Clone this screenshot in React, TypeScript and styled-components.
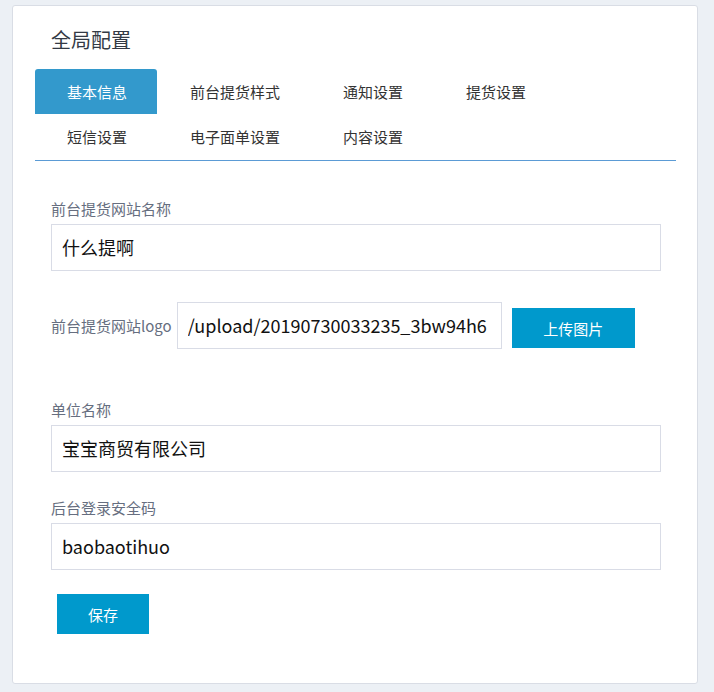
import React from "react";
import styled, { createGlobalStyle } from "styled-components";

const Global = createGlobalStyle`
  html, body { margin: 0; padding: 0; background: #ecf0f5; }
  body { font-family: "Noto Sans CJK SC", "Noto Sans", sans-serif; }
  * { box-sizing: border-box; }
`;

const Card = styled.div`
  margin: 5px 16px 0 12px;
  height: 679px;
  background: #fff;
  border: 1px solid #d9dde5;
  border-radius: 3px;
`;

const Title = styled.div`
  padding: 22px 0 0 38px;
  font-size: 20px;
  line-height: 24px;
  color: #333a45;
`;

const Tabs = styled.div`
  margin: 17px 21px 0 22px;
  display: flex;
  flex-wrap: wrap;
  border-bottom: 1px solid #5b9bd5;
  padding-bottom: 1px;
`;

const Tab = styled.div<{ $active?: boolean }>`
  height: 45px;
  line-height: 45px;
  padding: 0 30px 0 32px;
  margin-right: 1px;
  font-size: 15px;
  color: ${(p) => (p.$active ? "#fff" : "#333")};
  background: ${(p) => (p.$active ? "#3399cc" : "transparent")};
  border-radius: 3px 3px 0 0;
  white-space: nowrap;
`;

const Form = styled.div`
  padding: 38px 0 0 38px;
`;

const Label = styled.div<{ $top?: number }>`
  font-size: 15px;
  line-height: 20px;
  color: #666e80;
  margin-top: ${(p) => p.$top ?? 0}px;
  margin-bottom: 5px;
`;

const Input = styled.input<{ $w?: number }>`
  display: block;
  width: ${(p) => p.$w ?? 610}px;
  height: 47px;
  border: 1px solid #d9dce6;
  padding: 0 10px 1px;
  font-family: "Noto Sans CJK SC", "Noto Sans", sans-serif;
  font-size: 18px;
  color: #111;
  outline: none;
  background: #fff;
`;

const Row = styled.div`
  display: flex;
  align-items: center;
  margin-top: 31px;
`;

const InlineLabel = styled.div`
  font-size: 15px;
  color: #666e80;
  margin-right: 5px;
  white-space: nowrap;
`;

const Button = styled.button<{ $w: number }>`
  width: ${(p) => p.$w}px;
  height: 40px;
  border: none;
  background: #0099cc;
  color: #fff;
  font-family: "Noto Sans CJK SC", "Noto Sans", sans-serif;
  font-size: 15px;
  cursor: pointer;
`;

const UploadButton = styled(Button)`
  margin-left: 10px;
  align-self: flex-end;
  margin-bottom: 1px;
`;

const SaveButton = styled(Button)`
  display: block;
  margin: 24px 0 0 6px;
`;

const tabs = ["基本信息", "前台提货样式", "通知设置", "提货设置", "短信设置", "电子面单设置", "内容设置"];

export default function App() {
  return (
    <>
      <Global />
      <Card>
        <Title>全局配置</Title>
        <Tabs>
          {tabs.map((t, i) => (
            <Tab key={t} $active={i === 0}>
              {t}
            </Tab>
          ))}
        </Tabs>
        <Form>
          <Label>前台提货网站名称</Label>
          <Input defaultValue="什么提啊" />
          <Row>
            <InlineLabel>前台提货网站logo</InlineLabel>
            <Input $w={325} defaultValue="/upload/20190730033235_3bw94h6" />
            <UploadButton $w={123}>上传图片</UploadButton>
          </Row>
          <Label $top={51}>单位名称</Label>
          <Input defaultValue="宝宝商贸有限公司" />
          <Label $top={26}>后台登录安全码</Label>
          <Input defaultValue="baobaotihuo" />
          <SaveButton $w={92}>保存</SaveButton>
        </Form>
      </Card>
    </>
  );
}
